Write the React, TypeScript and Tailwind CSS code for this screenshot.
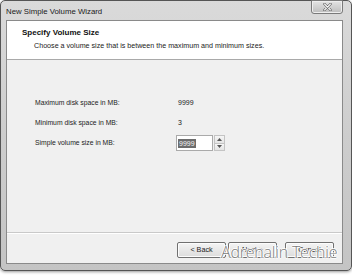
import React from "react";

const ui = { fontFamily: '"Liberation Sans", Arial, sans-serif' };

function WizButton({ label }: { label: string }) {
  return (
    <button className="w-[49px] h-[16px] rounded-[2px] border border-[#707070] bg-gradient-to-b from-[#f4f4f4] to-[#dcdcdc] text-[7.2px] text-[#222] leading-none flex items-center justify-center shadow-[inset_0_0_0_1px_#fcfcfc]">
      {label}
    </button>
  );
}

export default function App() {
  return (
    <div className="w-[352px] h-[275px] bg-white relative overflow-hidden" style={ui}>
      {/* window frame */}
      <div className="w-[352px] h-[271px] rounded-[5px] border border-[#555] bg-gradient-to-b from-[#dadada] via-[#cdcdcd] to-[#c4c4c4] flex flex-col shadow-[0_1px_3px_rgba(0,0,0,0.4)]">
        {/* title bar */}
        <div className="h-[19px] flex items-start pl-[5px] pr-[8px]">
          <span className="text-[7.8px] text-[#1a1a1a] mt-[5px]">New Simple Volume Wizard</span>
          <div className="ml-auto w-[32px] h-[14px] -mt-px rounded-b-[3px] border border-[#7a7a7a] bg-gradient-to-b from-[#e4e4e4] to-[#bdbdbd] flex items-center justify-center shadow-[inset_0_0_0_1px_#eeeeee]">
            <svg width="9" height="8" viewBox="0 0 9 8">
              <path d="M1.5 1 L7.5 7 M7.5 1 L1.5 7" stroke="#555" strokeWidth="2.4" strokeLinecap="round" />
              <path d="M1.5 1 L7.5 7 M7.5 1 L1.5 7" stroke="#fafafa" strokeWidth="1.1" strokeLinecap="round" />
            </svg>
          </div>
        </div>

        {/* client area */}
        <div className="flex-1 ml-[5px] mr-[8px] mb-[6px] border border-[#8a8a8a] bg-[#f0f0f0] flex flex-col">
          {/* header */}
          <div className="h-[39px] bg-white border-b border-[#a9a9a9] pl-[15px] pt-[7px]">
            <div className="text-[8px] font-bold text-[#111] leading-[10px]">Specify Volume Size</div>
            <div className="text-[7.15px] text-[#222] leading-[10px] mt-[3px] pl-[12px]">
              Choose a volume size that is between the maximum and minimum sizes.
            </div>
          </div>

          {/* body */}
          <div className="flex-1 pl-[28px] pt-[38px] text-[6.8px] text-[#222]">
            <div className="flex items-center h-[10px]">
              <span className="w-[143px]">Maximum disk space in MB:</span>
              <span className="text-[7px]">9999</span>
            </div>
            <div className="flex items-center h-[10px] mt-[10px]">
              <span className="w-[143px]">Minimum disk space in MB:</span>
              <span className="text-[7px]">3</span>
            </div>
            <div className="flex items-center h-[16px] mt-[7px]">
              <span className="w-[141px]">Simple volume size in MB:</span>
              <div className="flex h-[16px]">
                <div className="w-[37px] h-[16px] border border-[#aaa] bg-white flex items-center pl-[1px]">
                  <span className="bg-[#6d6d6d] text-[#f4f4f4] text-[7px] px-px leading-[9px]">9999</span>
                </div>
                <div className="w-[11px] h-[16px] flex flex-col ml-px">
                  <div className="flex-1 border border-[#c4c4c4] bg-gradient-to-b from-[#f6f6f6] to-[#e4e4e4] flex items-center justify-center">
                    <svg width="5" height="3" viewBox="0 0 5 3"><path d="M0 3 L2.5 0 L5 3 Z" fill="#555" /></svg>
                  </div>
                  <div className="flex-1 border border-t-0 border-[#c4c4c4] bg-gradient-to-b from-[#f6f6f6] to-[#e4e4e4] flex items-center justify-center">
                    <svg width="5" height="3" viewBox="0 0 5 3"><path d="M0 0 L2.5 3 L5 0 Z" fill="#555" /></svg>
                  </div>
                </div>
              </div>
            </div>
          </div>

          {/* footer */}
          <div className="h-[31px] border-t border-[#c9c9c9] shadow-[inset_0_1px_0_#ffffff] flex items-start pt-[9px] pl-[170px]">
            <WizButton label="< Back" />
            <div className="ml-[2px]">
              <WizButton label="Next >" />
            </div>
            <div className="ml-[8px]">
              <WizButton label="Cancel" />
            </div>
          </div>
        </div>
      </div>

      {/* watermark */}
      <div
        className="absolute left-[221px] top-[244px] text-[16px] font-light text-[#7c7c7c] leading-none tracking-[-0.2px]"
        style={{ fontFamily: '"Open Sans", "DejaVu Sans", sans-serif', textShadow: "1px 0 0 #fff, -1px 0 0 #fff, 0 1px 0 #fff, 0 -1px 0 #fff" }}
      >
        Adrenalin Techie
      </div>
    </div>
  );
}
